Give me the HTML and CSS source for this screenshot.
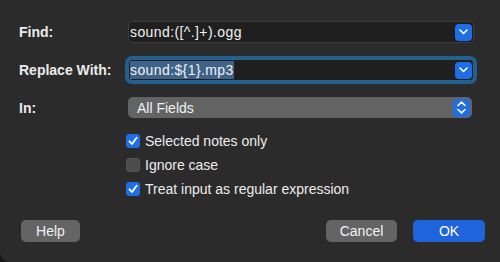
FILE: index.html
```html
<!DOCTYPE html>
<html lang="en">
<head>
  <meta charset="UTF-8">
  <title>Find and Replace</title>
  <link rel="stylesheet" href="styles.css">
</head>
<body>

  <div class="dialog">

    <div class="row">
      <label class="label">Find:</label>
      <div class="combo">
        <span class="combo-text">sound:([^.]+).ogg</span>
        <span class="drop-btn">
          <svg width="9" height="6" viewBox="0 0 9 6"><polyline points="1,1 4.5,4.5 8,1" fill="none" stroke="#fff" stroke-width="1.6" stroke-linecap="round" stroke-linejoin="round"/></svg>
        </span>
      </div>
    </div>

    <div class="row">
      <label class="label">Replace With:</label>
      <div class="combo focused">
        <span class="combo-text"><span class="sel">sound:${1}.mp3</span></span>
        <span class="drop-btn">
          <svg width="9" height="6" viewBox="0 0 9 6"><polyline points="1,1 4.5,4.5 8,1" fill="none" stroke="#fff" stroke-width="1.6" stroke-linecap="round" stroke-linejoin="round"/></svg>
        </span>
      </div>
    </div>

    <div class="row">
      <label class="label">In:</label>
      <div class="popup">
        <span class="popup-text">All Fields</span>
        <span class="step-btn">
          <svg width="9" height="13" viewBox="0 0 9 13"><polyline points="1,4.5 4.5,1.2 8,4.5" fill="none" stroke="#fff" stroke-width="1.6" stroke-linecap="round" stroke-linejoin="round"/><polyline points="1,8.5 4.5,11.8 8,8.5" fill="none" stroke="#fff" stroke-width="1.6" stroke-linecap="round" stroke-linejoin="round"/></svg>
        </span>
      </div>
    </div>

    <div class="options">
      <div class="check">
        <span class="box on">
          <svg width="10" height="10" viewBox="0 0 10 10"><polyline points="1.5,5.3 4,8 8.6,1.8" fill="none" stroke="#fff" stroke-width="1.8" stroke-linecap="round" stroke-linejoin="round"/></svg>
        </span>
        <span>Selected notes only</span>
      </div>
      <div class="check">
        <span class="box"></span>
        <span>Ignore case</span>
      </div>
      <div class="check">
        <span class="box on">
          <svg width="10" height="10" viewBox="0 0 10 10"><polyline points="1.5,5.3 4,8 8.6,1.8" fill="none" stroke="#fff" stroke-width="1.8" stroke-linecap="round" stroke-linejoin="round"/></svg>
        </span>
        <span>Treat input as regular expression</span>
      </div>
    </div>

    <div class="buttons">
      <button class="btn help">Help</button>
      <div class="right">
        <button class="btn cancel">Cancel</button>
        <button class="btn primary">OK</button>
      </div>
    </div>

  </div>

</body>
</html>
```

FILE: styles.css
```css
body {
  margin: 0;
  background-color: #161616;
  font-family: "Liberation Sans", Arial, sans-serif;
  font-size: 14px;
  color: #e6e6e6;
}

.dialog {
  height: 262px;
  box-sizing: border-box;
  background-color: #2b2b2b;
  border-bottom-left-radius: 10px;
  padding: 21px 26px 0 19px;
}

.row {
  display: grid;
  grid-template-columns: 109px 1fr;
  align-items: center;
  margin-bottom: 16px;
}

.row:nth-child(3) {
  margin-bottom: 0;
  padding-right: 2px;
}

.label {
  font-weight: bold;
  color: #ebebeb;
}

/* Combo box */
.combo {
  display: flex;
  align-items: center;
  justify-content: space-between;
  height: 22px;
  box-sizing: border-box;
  background-color: #1f1f1f;
  border: 1px solid #3c3c3c;
  border-radius: 4px;
  padding: 0 1px 0 0;
}

.combo.focused {
  box-shadow: 0 0 0 3px #21608f;
  border-color: #2e5f86;
}

.combo-text {
  padding-left: 1px;
  color: #f2f2f2;
  white-space: nowrap;
  letter-spacing: 0.4px;
}

.sel {
  background-color: #3e628a;
  padding: 1px 0;
}

.drop-btn, .step-btn {
  display: flex;
  align-items: center;
  justify-content: center;
  width: 17px;
  height: 17px;
  background-color: #1f6ee6;
  border-radius: 4px;
}

/* Popup */
.popup {
  display: flex;
  align-items: center;
  justify-content: space-between;
  height: 21px;
  background-color: #636363;
  border-radius: 5px;
  padding: 0 2px 0 9px;
}

.popup-text {
  color: #f2f2f2;
}

.step-btn {
  height: 18px;
}

/* Checkboxes */
.options {
  padding: 11px 0 0 107px;
}

.check {
  display: flex;
  align-items: center;
  gap: 5px;
  height: 24px;
  color: #ededed;
}

.box {
  display: flex;
  align-items: center;
  justify-content: center;
  width: 14px;
  height: 14px;
  box-sizing: border-box;
  background-color: #4b4b4b;
  border: 1px solid #555;
  border-radius: 3px;
}

.box.on {
  background-color: #1f6ee6;
  border-color: #1f6ee6;
}

/* Buttons */
.buttons {
  display: flex;
  justify-content: space-between;
  margin-top: 19px;
  padding-left: 2px;
  margin-right: -11px;
}

.right {
  display: flex;
  gap: 16px;
}

.btn {
  height: 22px;
  border: none;
  border-radius: 5px;
  background-color: #646464;
  color: #f2f2f2;
  font-family: inherit;
  font-size: 14px;
  padding: 0;
}

.help {
  width: 59px;
}

.cancel {
  width: 71px;
}

.primary {
  width: 72px;
  background-color: #1f64dc;
  color: #fff;
}
```
